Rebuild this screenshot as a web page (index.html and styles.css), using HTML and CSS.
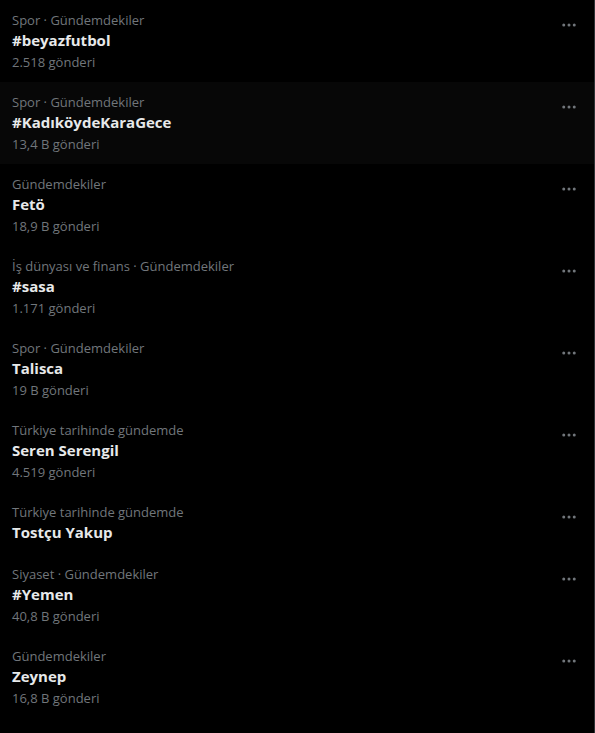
FILE: index.html
```html
<!DOCTYPE html>
<html lang="tr">
<head>
  <meta charset="UTF-8" />
  <meta name="viewport" content="width=device-width, initial-scale=1" />
  <title>Gündem</title>
  <link rel="stylesheet" href="styles.css">
</head>
<body>
  <div class="trends">
    <div class="trend">
      <div class="info">
        <span class="meta">Spor · Gündemdekiler</span>
        <span class="name">#beyazfutbol</span>
        <span class="count">2.518 gönderi</span>
      </div>
      <button class="more" aria-label="Daha fazla"><svg viewBox="0 0 24 24"><circle cx="5" cy="12" r="2"/><circle cx="12" cy="12" r="2"/><circle cx="19" cy="12" r="2"/></svg></button>
    </div>
    <div class="trend active">
      <div class="info">
        <span class="meta">Spor · Gündemdekiler</span>
        <span class="name">#KadıköydeKaraGece</span>
        <span class="count">13,4 B gönderi</span>
      </div>
      <button class="more" aria-label="Daha fazla"><svg viewBox="0 0 24 24"><circle cx="5" cy="12" r="2"/><circle cx="12" cy="12" r="2"/><circle cx="19" cy="12" r="2"/></svg></button>
    </div>
    <div class="trend">
      <div class="info">
        <span class="meta">Gündemdekiler</span>
        <span class="name">Fetö</span>
        <span class="count">18,9 B gönderi</span>
      </div>
      <button class="more" aria-label="Daha fazla"><svg viewBox="0 0 24 24"><circle cx="5" cy="12" r="2"/><circle cx="12" cy="12" r="2"/><circle cx="19" cy="12" r="2"/></svg></button>
    </div>
    <div class="trend">
      <div class="info">
        <span class="meta">İş dünyası ve finans · Gündemdekiler</span>
        <span class="name">#sasa</span>
        <span class="count">1.171 gönderi</span>
      </div>
      <button class="more" aria-label="Daha fazla"><svg viewBox="0 0 24 24"><circle cx="5" cy="12" r="2"/><circle cx="12" cy="12" r="2"/><circle cx="19" cy="12" r="2"/></svg></button>
    </div>
    <div class="trend">
      <div class="info">
        <span class="meta">Spor · Gündemdekiler</span>
        <span class="name">Talisca</span>
        <span class="count">19 B gönderi</span>
      </div>
      <button class="more" aria-label="Daha fazla"><svg viewBox="0 0 24 24"><circle cx="5" cy="12" r="2"/><circle cx="12" cy="12" r="2"/><circle cx="19" cy="12" r="2"/></svg></button>
    </div>
    <div class="trend">
      <div class="info">
        <span class="meta">Türkiye tarihinde gündemde</span>
        <span class="name">Seren Serengil</span>
        <span class="count">4.519 gönderi</span>
      </div>
      <button class="more" aria-label="Daha fazla"><svg viewBox="0 0 24 24"><circle cx="5" cy="12" r="2"/><circle cx="12" cy="12" r="2"/><circle cx="19" cy="12" r="2"/></svg></button>
    </div>
    <div class="trend">
      <div class="info">
        <span class="meta">Türkiye tarihinde gündemde</span>
        <span class="name">Tostçu Yakup</span>
      </div>
      <button class="more" aria-label="Daha fazla"><svg viewBox="0 0 24 24"><circle cx="5" cy="12" r="2"/><circle cx="12" cy="12" r="2"/><circle cx="19" cy="12" r="2"/></svg></button>
    </div>
    <div class="trend">
      <div class="info">
        <span class="meta">Siyaset · Gündemdekiler</span>
        <span class="name">#Yemen</span>
        <span class="count">40,8 B gönderi</span>
      </div>
      <button class="more" aria-label="Daha fazla"><svg viewBox="0 0 24 24"><circle cx="5" cy="12" r="2"/><circle cx="12" cy="12" r="2"/><circle cx="19" cy="12" r="2"/></svg></button>
    </div>
    <div class="trend">
      <div class="info">
        <span class="meta">Gündemdekiler</span>
        <span class="name">Zeynep</span>
        <span class="count">16,8 B gönderi</span>
      </div>
      <button class="more" aria-label="Daha fazla"><svg viewBox="0 0 24 24"><circle cx="5" cy="12" r="2"/><circle cx="12" cy="12" r="2"/><circle cx="19" cy="12" r="2"/></svg></button>
    </div>
  </div>
</body>
</html>
```

FILE: styles.css
```css
* {
  box-sizing: border-box;
  margin: 0;
  padding: 0;
}
body {
  font-family: 'Open Sans', 'Noto Sans', sans-serif;
  background: #000;
  color: #e7e9ea;
  min-height: 100vh;
}
.trends {
  width: 595px;
  min-height: 733px;
  border-right: 1px solid #2f3336;
}
.trend {
  display: flex;
  align-items: flex-start;
  justify-content: space-between;
  padding: 12px;
}
.trend.active {
  background-color: #070707;
}
.info {
  display: flex;
  flex-direction: column;
}
.meta,
.count {
  font-size: 13px;
  line-height: 16px;
  color: #71767b;
}
.name {
  font-size: 15px;
  line-height: 20px;
  font-weight: 700;
  padding-top: 2px;
  color: #e7e9ea;
}
.count {
  margin-top: 4px;
}
.more {
  background: none;
  border: none;
  width: 20px;
  height: 20px;
  margin: 3px 3px 0 0;
  display: flex;
  align-items: center;
  justify-content: center;
  cursor: pointer;
}
.more svg {
  width: 18px;
  height: 18px;
  fill: #71767b;
}
```
